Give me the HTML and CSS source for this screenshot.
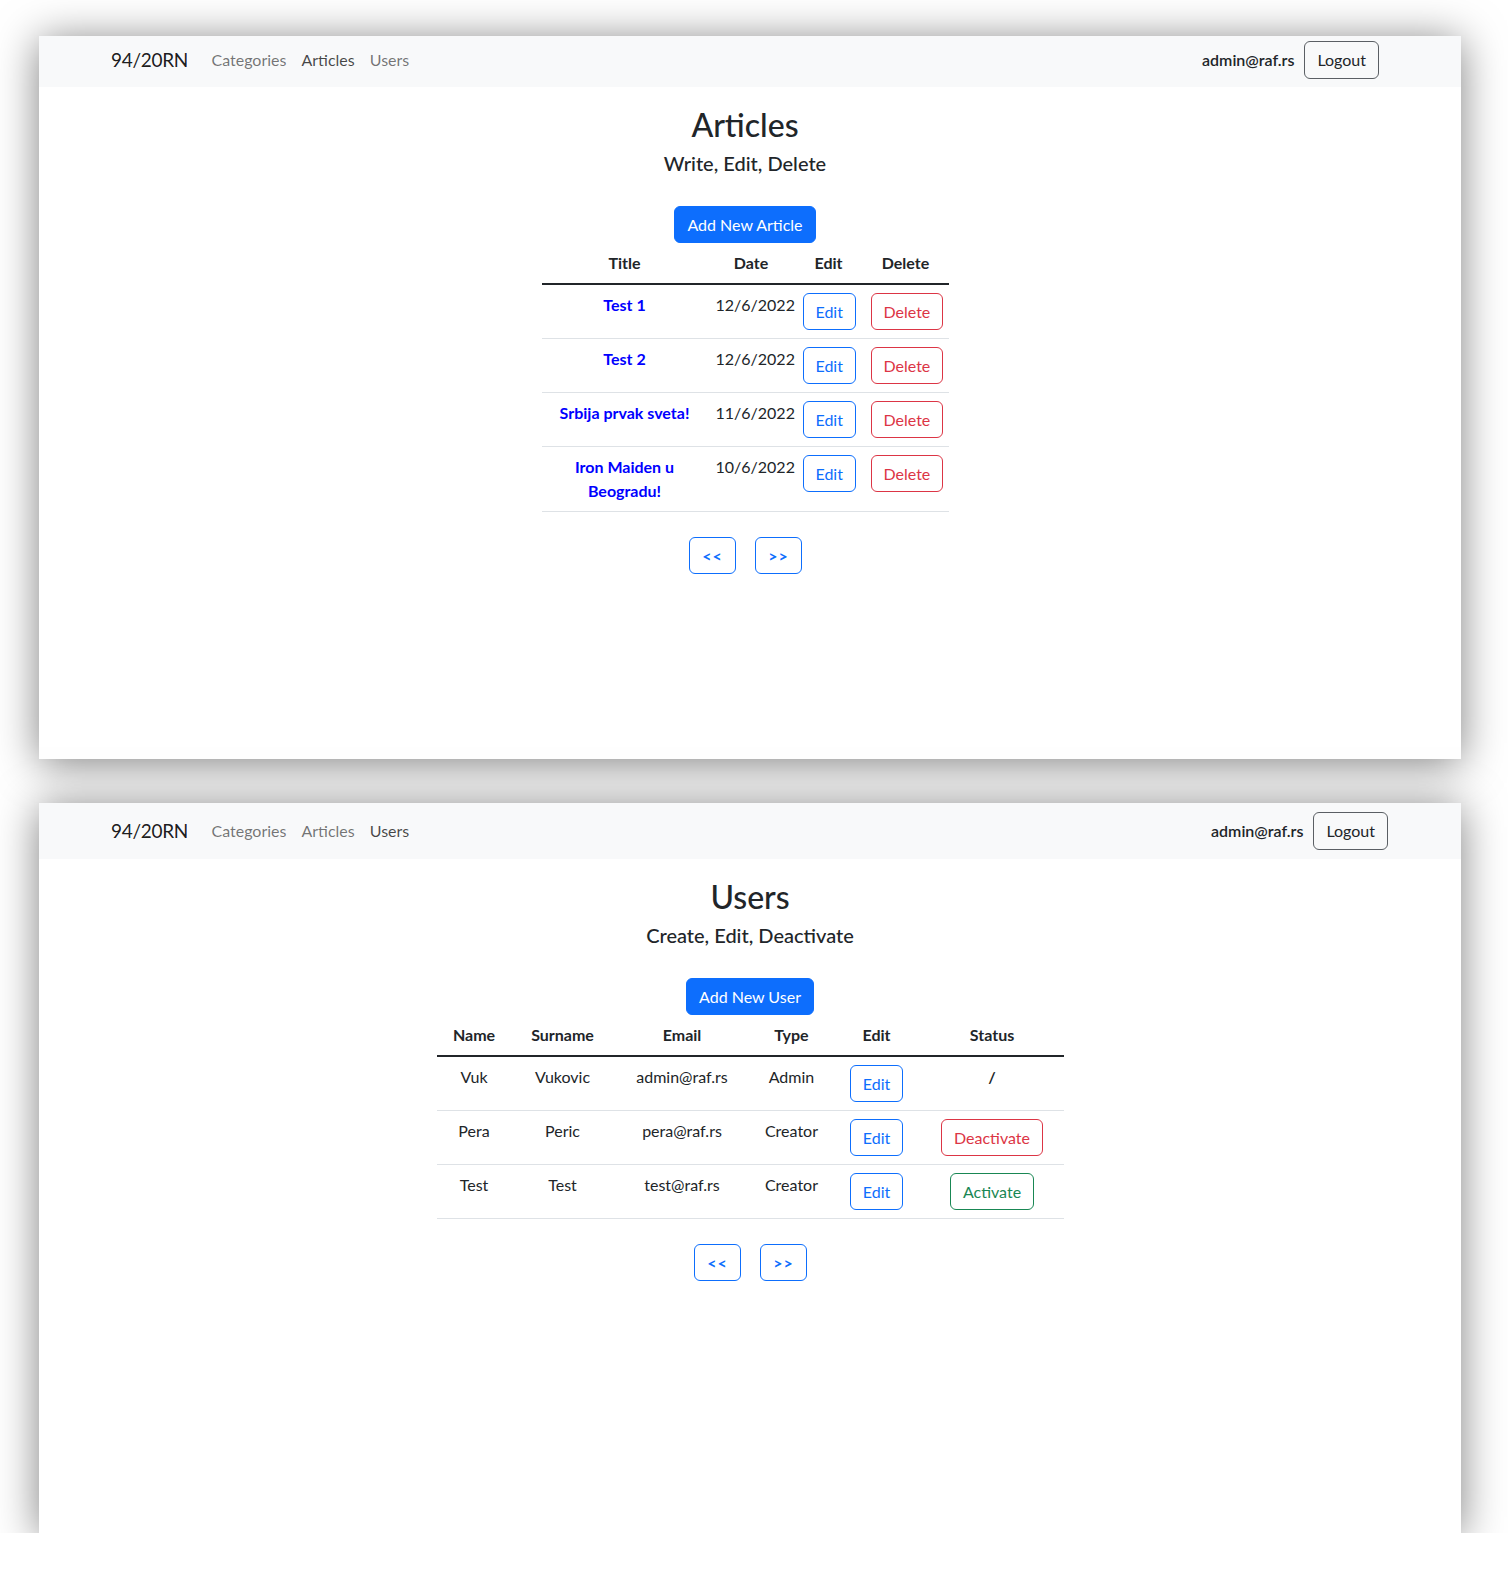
FILE: index.html
```html
<!DOCTYPE html>
<html lang="en">
<head>
<meta charset="utf-8">
<title>94/20RN</title>
<link rel="stylesheet" href="styles.css">
</head>
<body>
<div class="page">
  <section class="window window-articles">
    <nav class="navbar navbar-cropped">
      <div class="nav-left">
        <span class="brand">94/20RN</span>
        <a class="nav-link">Categories</a>
        <a class="nav-link active">Articles</a>
        <a class="nav-link">Users</a>
      </div>
      <div class="nav-right">
        <span class="user">admin@raf.rs</span>
        <button class="btn btn-outline-dark">Logout</button>
      </div>
    </nav>
    <main class="content">
      <h2 class="title">Articles</h2>
      <h5 class="subtitle">Write, Edit, Delete</h5>
      <button class="btn btn-primary">Add New Article</button>
      <table class="table table-articles">
        <colgroup>
          <col class="c-title"><col class="c-date"><col class="c-edit"><col class="c-delete">
        </colgroup>
        <thead>
          <tr><th>Title</th><th>Date</th><th>Edit</th><th>Delete</th></tr>
        </thead>
        <tbody>
          <tr>
            <td><a class="article-link">Test 1</a></td>
            <td>12/6/2022</td>
            <td><button class="btn btn-outline-primary">Edit</button></td>
            <td><button class="btn btn-outline-danger">Delete</button></td>
          </tr>
          <tr>
            <td><a class="article-link">Test 2</a></td>
            <td>12/6/2022</td>
            <td><button class="btn btn-outline-primary">Edit</button></td>
            <td><button class="btn btn-outline-danger">Delete</button></td>
          </tr>
          <tr>
            <td><a class="article-link">Srbija prvak sveta!</a></td>
            <td>11/6/2022</td>
            <td><button class="btn btn-outline-primary">Edit</button></td>
            <td><button class="btn btn-outline-danger">Delete</button></td>
          </tr>
          <tr>
            <td><a class="article-link">Iron Maiden u Beogradu!</a></td>
            <td>10/6/2022</td>
            <td><button class="btn btn-outline-primary">Edit</button></td>
            <td><button class="btn btn-outline-danger">Delete</button></td>
          </tr>
        </tbody>
      </table>
      <div class="pager">
        <button class="btn btn-outline-primary btn-page">&lt;&lt;</button>
        <button class="btn btn-outline-primary btn-page">&gt;&gt;</button>
      </div>
    </main>
  </section>

  <section class="window window-users">
    <nav class="navbar navbar-full">
      <div class="nav-left">
        <span class="brand">94/20RN</span>
        <a class="nav-link">Categories</a>
        <a class="nav-link">Articles</a>
        <a class="nav-link active">Users</a>
      </div>
      <div class="nav-right">
        <span class="user">admin@raf.rs</span>
        <button class="btn btn-outline-dark">Logout</button>
      </div>
    </nav>
    <main class="content">
      <h2 class="title">Users</h2>
      <h5 class="subtitle">Create, Edit, Deactivate</h5>
      <button class="btn btn-primary">Add New User</button>
      <table class="table table-users">
        <colgroup>
          <col class="c-name"><col class="c-surname"><col class="c-email"><col class="c-type"><col class="c-uedit"><col class="c-status">
        </colgroup>
        <thead>
          <tr><th>Name</th><th>Surname</th><th>Email</th><th>Type</th><th>Edit</th><th>Status</th></tr>
        </thead>
        <tbody>
          <tr>
            <td>Vuk</td>
            <td>Vukovic</td>
            <td>admin@raf.rs</td>
            <td>Admin</td>
            <td><button class="btn btn-outline-primary">Edit</button></td>
            <td class="status-none">/</td>
          </tr>
          <tr>
            <td>Pera</td>
            <td>Peric</td>
            <td>pera@raf.rs</td>
            <td>Creator</td>
            <td><button class="btn btn-outline-primary">Edit</button></td>
            <td><button class="btn btn-outline-danger">Deactivate</button></td>
          </tr>
          <tr>
            <td>Test</td>
            <td>Test</td>
            <td>test@raf.rs</td>
            <td>Creator</td>
            <td><button class="btn btn-outline-primary">Edit</button></td>
            <td><button class="btn btn-outline-success">Activate</button></td>
          </tr>
        </tbody>
      </table>
      <div class="pager">
        <button class="btn btn-outline-primary btn-page">&lt;&lt;</button>
        <button class="btn btn-outline-primary btn-page">&gt;&gt;</button>
      </div>
    </main>
  </section>
</div>
</body>
</html>
```

FILE: styles.css
```css
* { box-sizing: border-box; }

html, body {
  margin: 0;
  padding: 0;
  background: #ffffff;
}

body {
  font-family: "Lato", "Open Sans", sans-serif;
  font-size: 16px;
  line-height: 1.5;
  color: #212529;
}

.page {
  display: flex;
  flex-direction: column;
  gap: 44px;
  padding: 36px 0 0 39px;
}

.window {
  width: 1422px;
  background: #ffffff;
  box-shadow: 0 4px 40px rgba(0, 0, 0, 0.5);
  display: flex;
  flex-direction: column;
}

.window-articles {
  height: 723px;
  padding-right: 10px;
}

.window-users {
  height: 730px;
}

/* navbar */
.navbar {
  display: flex;
  align-items: center;
  justify-content: space-between;
  height: 55px;
  padding: 0 73px 0 72px;
  background: #f8f9fa;
}

.navbar-full {
  height: 56px;
}

.navbar-cropped {
  height: 51px;
  padding-bottom: 4px;
  margin-right: -10px;
  padding-right: 82px;
}

.nav-left,
.nav-right {
  display: flex;
  align-items: center;
}

.brand {
  font-size: 19px;
  letter-spacing: -0.3px;
  line-height: 30px;
  color: rgba(0, 0, 0, 0.9);
  margin-right: 16px;
}

.nav-link {
  padding: 0 7.5px;
  color: rgba(0, 0, 0, 0.55);
  text-decoration: none;
}

.nav-link.active {
  color: rgba(0, 0, 0, 0.72);
}

.user {
  font-weight: 600;
  margin-right: 10px;
}

/* buttons */
.btn {
  display: inline-block;
  font-family: inherit;
  font-size: 16px;
  line-height: 23px;
  padding: 6px 12px;
  border: 1px solid transparent;
  border-radius: 6px;
  background: transparent;
  cursor: pointer;
  vertical-align: top;
}

.btn-primary {
  background: #0d6efd;
  border-color: #0d6efd;
  color: #ffffff;
}

.btn-outline-dark {
  border-color: #5a5f64;
  color: #212529;
  line-height: 24px;
}

.btn-outline-primary {
  border-color: #0d6efd;
  color: #0d6efd;
}

.btn-outline-danger {
  border-color: #dc3545;
  color: #dc3545;
}

.btn-outline-success {
  border-color: #198754;
  color: #198754;
}

/* content */
.content {
  display: flex;
  flex-direction: column;
  align-items: center;
  padding-top: 19px;
}

.title {
  font-size: 32px;
  font-weight: 500;
  line-height: 1.2;
  margin: 0 0 7px;
}

.subtitle {
  font-size: 20px;
  font-weight: 500;
  line-height: 1.2;
  margin: 0 0 31px;
}

/* tables */
.table {
  border-collapse: collapse;
  table-layout: fixed;
  text-align: center;
}

.table th {
  padding: 8px;
  font-weight: 700;
  border-bottom: 2px solid #212529;
}

.table td {
  padding: 8px;
  vertical-align: top;
  border-bottom: 1px solid #dee2e6;
}

.table-articles { width: 407px; }
.c-title { width: 166px; }
.c-date { width: 87px; }
.c-edit { width: 68px; }
.c-delete { width: 86px; }

.table-users { width: 627px; }
.c-name { width: 75px; }
.c-surname { width: 102px; }
.c-email { width: 137px; }
.c-type { width: 82px; }
.c-uedit { width: 88px; }
.c-status { width: 143px; }

.article-link {
  color: #0000ff;
  font-weight: 700;
  text-decoration: none;
}

.status-none {
  font-weight: 700;
}

/* pager */
.pager {
  display: flex;
  gap: 19px;
  margin-top: 25px;
}

.btn-page {
  font-size: 16px;
  font-weight: 700;
  letter-spacing: 1px;
  width: 47px;
  padding: 6px 0 6px 1px;
  text-align: center;
}
```
